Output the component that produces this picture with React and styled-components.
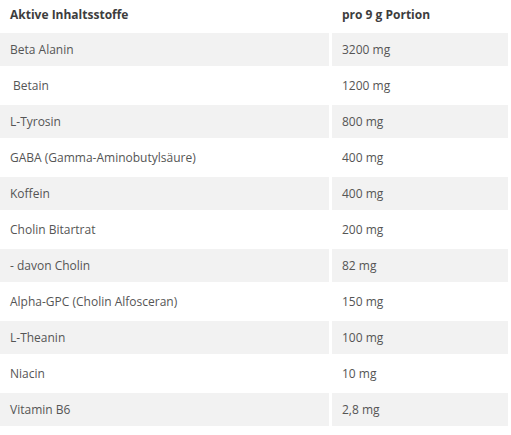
import React from 'react';
import styled, { createGlobalStyle } from 'styled-components';

const GlobalStyle = createGlobalStyle`
  body {
    margin: 0;
    background: #ffffff;
    font-family: "Open Sans", "Liberation Sans", sans-serif;
  }
`;

const Table = styled.div`
  display: grid;
  grid-template-columns: 329px 176px;
  grid-template-rows: 30px;
  grid-auto-rows: 33px;
  column-gap: 3px;
  row-gap: 3px;
  width: 508px;
`;

const Cell = styled.div`
  align-items: center;
  background-color: ${({ $striped }) => ($striped ? '#f2f2f2' : '#ffffff')};
  color: ${({ $head }) => ($head ? '#3d3d3d' : '#555555')};
  display: flex;
  font-size: 12px;
  font-weight: ${({ $head }) => ($head ? 700 : 400)};
  padding-bottom: ${({ $head }) => ($head ? '2px' : '0')};
  padding-left: ${({ $indent }) => ($indent ? '13px' : '10px')};
  white-space: nowrap;
`;

const rows = [
  ['Beta Alanin', '3200 mg'],
  ['Betain', '1200 mg', true],
  ['L-Tyrosin', '800 mg'],
  ['GABA (Gamma-Aminobutylsäure)', '400 mg'],
  ['Koffein', '400 mg'],
  ['Cholin Bitartrat', '200 mg'],
  ['- davon Cholin', '82 mg'],
  ['Alpha-GPC (Cholin Alfosceran)', '150 mg'],
  ['L-Theanin', '100 mg'],
  ['Niacin', '10 mg'],
  ['Vitamin B6', '2,8 mg'],
];

export default function App() {
  return (
    <>
      <GlobalStyle />
      <Table>
        <Cell $head>Aktive Inhaltsstoffe</Cell>
        <Cell $head>pro 9 g Portion</Cell>
        {rows.map(([name, amount, indent], i) => (
          <React.Fragment key={name}>
            <Cell $striped={i % 2 === 0} $indent={indent}>{name}</Cell>
            <Cell $striped={i % 2 === 0}>{amount}</Cell>
          </React.Fragment>
        ))}
      </Table>
    </>
  );
}
